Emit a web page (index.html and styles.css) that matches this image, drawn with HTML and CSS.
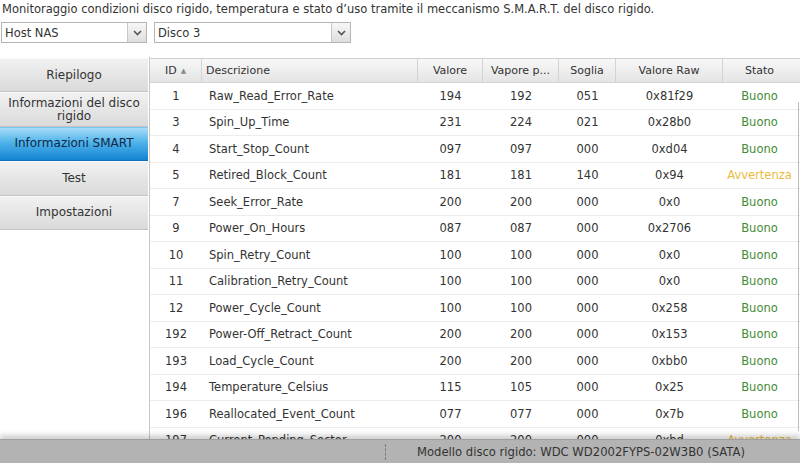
FILE: index.html
```html
<!DOCTYPE html>
<html lang="it">
<head>
<meta charset="utf-8">
<title>S.M.A.R.T.</title>
<link rel="stylesheet" href="styles.css">
</head>
<body>
<div class="page">
  <p class="intro">Monitoraggio condizioni disco rigido, temperatura e stato d’uso tramite il meccanismo S.M.A.R.T. del disco rigido.</p>
  <div class="selectors">
    <div class="select host"><span class="select-value">Host NAS</span><span class="select-btn"><svg width="9" height="6" viewBox="0 0 9 6"><path d="M1 1 L4.5 4.5 L8 1" fill="none" stroke="#555" stroke-width="1.6"/></svg></span></div>
    <div class="select disk"><span class="select-value">Disco 3</span><span class="select-btn"><svg width="9" height="6" viewBox="0 0 9 6"><path d="M1 1 L4.5 4.5 L8 1" fill="none" stroke="#555" stroke-width="1.6"/></svg></span></div>
  </div>
  <div class="main">
    <nav class="sidebar">
      <div class="nav-item">Riepilogo</div>
      <div class="nav-item">Informazioni del disco rigido</div>
      <div class="nav-item active">Informazioni SMART</div>
      <div class="nav-item">Test</div>
      <div class="nav-item">Impostazioni</div>
    </nav>
    <section class="grid">
      <div class="row head">
        <div class="c id">ID <span class="sort">▲</span></div>
        <div class="c desc">Descrizione</div>
        <div class="c">Valore</div>
        <div class="c">Vapore p...</div>
        <div class="c">Soglia</div>
        <div class="c">Valore Raw</div>
        <div class="c">Stato</div>
      </div>
      <div class="body">
        <div class="row"><div class="c">1</div><div class="c desc">Raw_Read_Error_Rate</div><div class="c">194</div><div class="c">192</div><div class="c">051</div><div class="c">0x81f29</div><div class="c ok">Buono</div></div>
        <div class="row"><div class="c">3</div><div class="c desc">Spin_Up_Time</div><div class="c">231</div><div class="c">224</div><div class="c">021</div><div class="c">0x28b0</div><div class="c ok">Buono</div></div>
        <div class="row"><div class="c">4</div><div class="c desc">Start_Stop_Count</div><div class="c">097</div><div class="c">097</div><div class="c">000</div><div class="c">0xd04</div><div class="c ok">Buono</div></div>
        <div class="row"><div class="c">5</div><div class="c desc">Retired_Block_Count</div><div class="c">181</div><div class="c">181</div><div class="c">140</div><div class="c">0x94</div><div class="c warn">Avvertenza</div></div>
        <div class="row"><div class="c">7</div><div class="c desc">Seek_Error_Rate</div><div class="c">200</div><div class="c">200</div><div class="c">000</div><div class="c">0x0</div><div class="c ok">Buono</div></div>
        <div class="row"><div class="c">9</div><div class="c desc">Power_On_Hours</div><div class="c">087</div><div class="c">087</div><div class="c">000</div><div class="c">0x2706</div><div class="c ok">Buono</div></div>
        <div class="row"><div class="c">10</div><div class="c desc">Spin_Retry_Count</div><div class="c">100</div><div class="c">100</div><div class="c">000</div><div class="c">0x0</div><div class="c ok">Buono</div></div>
        <div class="row"><div class="c">11</div><div class="c desc">Calibration_Retry_Count</div><div class="c">100</div><div class="c">100</div><div class="c">000</div><div class="c">0x0</div><div class="c ok">Buono</div></div>
        <div class="row"><div class="c">12</div><div class="c desc">Power_Cycle_Count</div><div class="c">100</div><div class="c">100</div><div class="c">000</div><div class="c">0x258</div><div class="c ok">Buono</div></div>
        <div class="row"><div class="c">192</div><div class="c desc">Power-Off_Retract_Count</div><div class="c">200</div><div class="c">200</div><div class="c">000</div><div class="c">0x153</div><div class="c ok">Buono</div></div>
        <div class="row"><div class="c">193</div><div class="c desc">Load_Cycle_Count</div><div class="c">200</div><div class="c">200</div><div class="c">000</div><div class="c">0xbb0</div><div class="c ok">Buono</div></div>
        <div class="row"><div class="c">194</div><div class="c desc">Temperature_Celsius</div><div class="c">115</div><div class="c">105</div><div class="c">000</div><div class="c">0x25</div><div class="c ok">Buono</div></div>
        <div class="row"><div class="c">196</div><div class="c desc">Reallocated_Event_Count</div><div class="c">077</div><div class="c">077</div><div class="c">000</div><div class="c">0x7b</div><div class="c ok">Buono</div></div>
        <div class="row"><div class="c">197</div><div class="c desc">Current_Pending_Sector</div><div class="c">200</div><div class="c">200</div><div class="c">000</div><div class="c">0xbd</div><div class="c warn">Avvertenza</div></div>
      </div>
      <div class="scroll"></div>
    </section>
  </div>
  <footer class="status">
    <span class="sep"></span>
    <span class="model">Modello disco rigido: WDC WD2002FYPS-02W3B0 (SATA)</span>
  </footer>
</div>
</body>
</html>
```

FILE: styles.css
```css
* { box-sizing: border-box; }
html, body { margin: 0; padding: 0; background: #fff; }
body {
  font-family: "DejaVu Sans", Verdana, sans-serif;
  font-size: 11px;
  color: #333;
}
.page {
  width: 800px;
  height: 466px;
  display: grid;
  grid-template-rows: 20px 37px 1fr 24px;
  padding-bottom: 3px;
  overflow: hidden;
}
.intro {
  margin: 0;
  padding: 2px 0 0 2px;
  font-size: 11.5px;
  white-space: nowrap;
}
.selectors {
  display: flex;
  gap: 7px;
  padding: 2px 0 0 1px;
  align-items: flex-start;
}
.select {
  height: 21px;
  border: 1px solid #b5b5b5;
  display: flex;
  background: #fff;
}
.select.host { width: 146px; }
.select.disk { width: 197px; }
.select-value {
  flex: 1;
  padding: 3px 0 0 3px;
  font-size: 11.5px;
}
.select-btn {
  width: 19px;
  border-left: 1px solid #c8c8c8;
  background: linear-gradient(#f7f7f7, #dedede);
  display: flex;
  align-items: center;
  justify-content: center;
}
.main {
  display: flex;
  min-height: 0;
}
.sidebar {
  width: 150px;
  padding-top: 1px;
  flex-shrink: 0;
  border-right: 1px solid #c7c7c7;
}
.nav-item {
  width: 148px;
  height: 34.4px;
  display: flex;
  align-items: center;
  justify-content: center;
  text-align: center;
  line-height: 13px;
  font-size: 12px;
  color: #333;
  background: linear-gradient(#f1f1f1, #dadada);
  border-top: 1px solid #fafafa;
  border-bottom: 1px solid #c3c3c3;
}
.nav-item.active {
  background: linear-gradient(#a6dcf8, #4fb3ea 45%, #1384d2);
  border-top-color: #7cc7ef;
  border-bottom-color: #0f6fb8;
  color: #0f2748;
}
.grid {
  flex: 1;
  position: relative;
  display: flex;
  flex-direction: column;
  min-height: 0;
  overflow: hidden;
}
.row {
  display: grid;
  grid-template-columns: 52px 216px 65px 76px 57px 107px 73px;
  align-items: center;
}
.row.head {
  height: 25px;
  margin-top: 1px;
  background: linear-gradient(#f8f8f8, #e4e4e4);
  border-top: 1px solid #cfcfcf;
  border-bottom: 1px solid #d2d2d2;
  flex-shrink: 0;
}
.row.head .c {
  height: 100%;
  display: flex;
  align-items: center;
  justify-content: center;
  border-right: 1px solid #d3d3d3;
  color: #333;
}
.row.head .c.desc { justify-content: flex-start; padding-left: 4px; }
.row.head .c:last-child { border-right: 0; }
.sort { font-size: 7px; color: #888; margin-left: 4px; }
.body { flex: 1; overflow: hidden; font-size: 11.5px; }
.body .row {
  height: 26.5px;
  border-bottom: 1px solid #ececec;
}
.c { text-align: center; white-space: nowrap; overflow: hidden; }
.body .c.desc { text-align: left; padding-left: 7px; }
.ok { color: #3f8c34; }
.warn { color: #e9bb3f; overflow: visible; }
.scroll {
  position: absolute;
  right: 1px;
  top: 45px;
  bottom: 8px;
  width: 1px;
  background: #bdbdbd;
}
.status {
  position: relative;
  z-index: 2;
  background: #b3b3b3;
  box-shadow: 0 -4px 5px rgba(0,0,0,0.18);
  border-top: 1px solid #9e9e9e;
  display: flex;
  align-items: center;
  font-size: 11.6px;
  color: #333;
}
.sep {
  width: 0;
  height: 16px;
  margin-left: 385px;
  border-left: 1px dashed #7a7a7a;
}
.model { margin-left: 31px; }
```
